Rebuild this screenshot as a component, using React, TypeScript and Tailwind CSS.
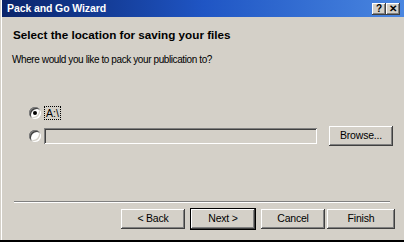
import React from "react"

const raised =
  "bg-[#d4d0c8] shadow-[inset_-1px_-1px_#404040,inset_1px_1px_#ffffff,inset_-2px_-2px_#808080,inset_2px_2px_#d4d0c8]"

function Btn({ label, primary }: { label: string; primary?: boolean }) {
  return (
    <button
      className={`h-[20px] w-[64px] flex items-center justify-center text-[10.5px] tracking-[-0.2px] text-black ${raised} ${
        primary ? "outline outline-1 outline-black" : ""
      }`}
    >
      {label}
    </button>
  )
}

function Radio({ checked }: { checked?: boolean }) {
  return (
    <span className="w-[12px] h-[12px] rounded-full bg-white flex items-center justify-center shrink-0 shadow-[inset_1px_1px_#808080,inset_-1px_-1px_#ffffff,inset_2px_2px_#404040,inset_-2px_-2px_#d4d0c8]">
      {checked && <span className="w-[4px] h-[4px] rounded-full bg-black" />}
    </span>
  )
}

export default function App() {
  return (
    <div
      className="w-[404px] h-[242px] bg-[#d4d0c8] flex flex-col border-b-2 border-black shadow-[inset_1px_0_0_#d4d0c8,inset_2px_0_0_#ffffff] overflow-hidden"
      style={{ fontFamily: '"Liberation Sans", Arial, sans-serif' }}
    >
      {/* title bar */}
      <div className="h-[17px] bg-gradient-to-r from-[#0a246a] via-[#1f55c4] to-[#4a86e0] flex items-center justify-between pl-[5px] pr-[4px] ml-[2px]">
        <span className="text-white font-bold text-[10.5px] tracking-[-0.1px] leading-none">Pack and Go Wizard</span>
        <div className="flex">
          <span className={`w-[14px] h-[12px] flex items-center justify-center text-[10px] font-bold leading-none text-black ${raised}`}>?</span>
          <span className={`w-[14px] h-[12px] flex items-center justify-center text-[10px] font-bold leading-none text-black ${raised}`}>✕</span>
        </div>
      </div>

      <div className="pl-[13px] mt-[11px] text-[11.7px] font-bold leading-[13px] text-black">
        Select the location for saving your files
      </div>
      <div className="pl-[12px] mt-[12px] text-[10px] tracking-[-0.4px] leading-[13px] text-black">
        Where would you like to pack your publication to?
      </div>

      <div className="flex items-center pl-[29px] mt-[40px] h-[13px] gap-[3px]">
        <Radio checked />
        <span className="text-[10.5px] leading-[12px] text-black border border-dotted border-black px-[1px]">A:\</span>
      </div>

      <div className="flex items-center pl-[29px] mt-[6px] h-[21px]">
        <Radio />
        <div className="ml-[3px] w-[273px] h-[16px] bg-[#d4d0c8] shadow-[inset_1px_1px_#808080,inset_-1px_-1px_#ffffff,inset_2px_2px_#404040,inset_-2px_-2px_#d4d0c8]" />
        <div className="ml-[12px]">
          <Btn label="Browse..." />
        </div>
      </div>

      <div className="flex-1" />

      <div className="mx-[14px] h-[2px] border-t border-[#808080] border-b border-b-white" />

      <div className="flex justify-end gap-[6px] pr-[9px] mt-[6px] mb-[11px]">
        <Btn label="< Back" />
        <Btn label="Next >" primary />
        <Btn label="Cancel" />
        <div className="-ml-[4px]">
          <button className={`h-[20px] w-[68px] flex items-center justify-center text-[10.5px] tracking-[-0.2px] text-black ${raised}`}>
            Finish
          </button>
        </div>
      </div>
    </div>
  )
}
